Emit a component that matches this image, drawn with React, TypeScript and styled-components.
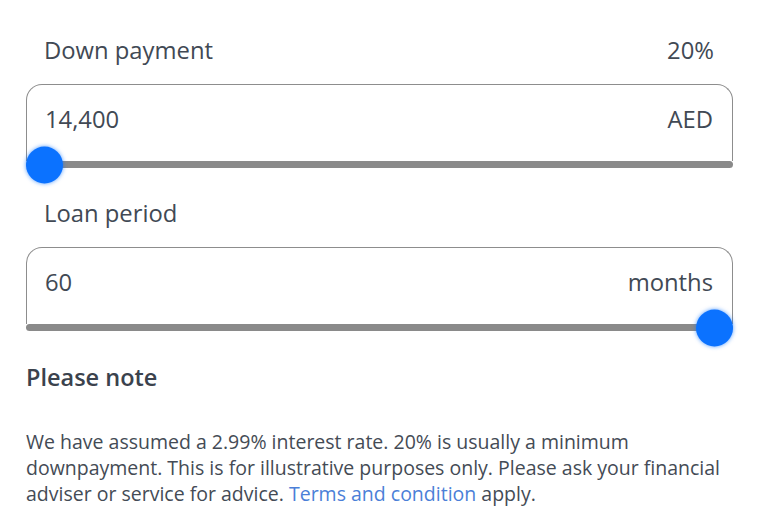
import { createGlobalStyle } from "styled-components"
import styled from "styled-components"

const GlobalStyle = createGlobalStyle`
  body {
    margin: 0;
    background: #ffffff;
    font-family: "Open Sans", "Noto Sans", sans-serif;
    color: #414954;
  }
`

const Page = styled.div`
  width: 707px;
  padding: 34px 0 0 26px;
`

const Field = styled.div`
  margin-bottom: 29px;
`

const LabelRow = styled.div`
  display: flex;
  justify-content: space-between;
  align-items: center;
  height: 32px;
  padding: 0 19px 0 18px;
  margin-bottom: 18px;
  font-size: 23.8px;
`

const Box = styled.div`
  display: flex;
  justify-content: space-between;
  align-items: flex-start;
  height: 77px;
  box-sizing: border-box;
  padding: 18px 19px 0 18px;
  border: 1.5px solid #8d8d8d;
  border-bottom: none;
  border-radius: 16px 16px 0 0;
  font-size: 23.8px;
  line-height: 32px;
`

const Track = styled.div`
  position: relative;
  height: 7px;
  background: #8a8a8a;
  border-radius: 4px;
`

const Thumb = styled.div`
  position: absolute;
  top: 50%;
  width: 37px;
  height: 37px;
  margin-left: -18.5px;
  transform: translateY(-50%);
  border-radius: 50%;
  background: #0b72ff;
  box-shadow: 0 0 4px rgba(11, 114, 255, 0.7);
`

const Heading = styled.h3`
  margin: 0 0 35px;
  font-size: 23.5px;
  font-weight: 600;
  line-height: 34px;
  color: #3b424d;
`

const Note = styled.p`
  margin: 0;
  font-size: 19.5px;
  line-height: 26px;
  color: #444b55;
`

const Link = styled.a`
  color: #4b7fd8;
  text-decoration: none;
`

const SliderField = (props: { label: string; extra?: string; value: string; unit: string; percent: number }) => {
  // the thumb centre sits on the track ends, inset by its radius
  const left = `calc(18.5px + (100% - 37px) * ${props.percent / 100})`
  return (
    <Field>
      <LabelRow>
        <span>{props.label}</span>
        {props.extra && <span>{props.extra}</span>}
      </LabelRow>
      <Box>
        <span>{props.value}</span>
        <span>{props.unit}</span>
      </Box>
      <Track>
        <Thumb style={{ left }} />
      </Track>
    </Field>
  )
}

const App = () => {
  return (
    <Page>
      <GlobalStyle />
      <SliderField label="Down payment" extra="20%" value="14,400" unit="AED" percent={0} />
      <SliderField label="Loan period" value="60" unit="months" percent={100} />
      <Heading>Please note</Heading>
      <Note>
        We have assumed a 2.99% interest rate. 20% is usually a minimum downpayment. This is for illustrative
        purposes only. Please ask your financial adviser or service for advice. <Link href="#">Terms and condition</Link>{" "}
        apply.
      </Note>
    </Page>
  )
}

export default App
